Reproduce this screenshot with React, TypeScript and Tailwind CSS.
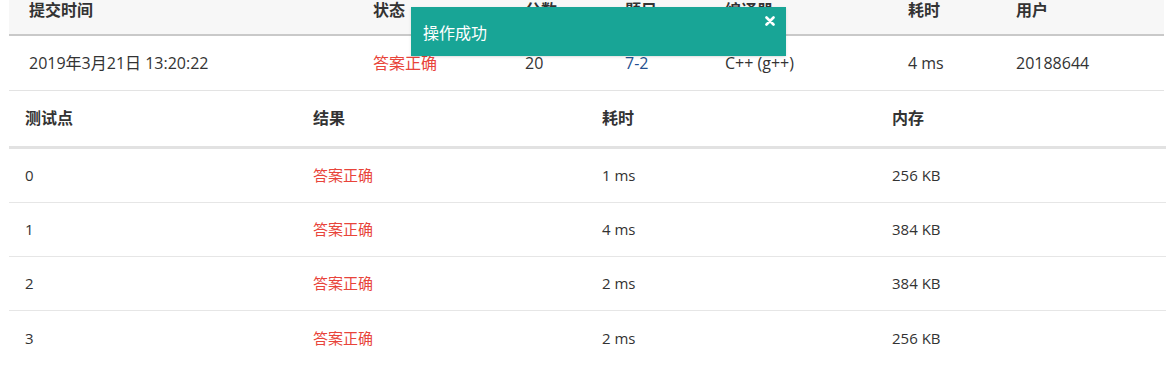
import React from "react";

const font = { fontFamily: '"Open Sans", "Noto Sans CJK SC", sans-serif' };

const topCols = [
  { label: "提交时间", w: "w-[344px]" },
  { label: "状态", w: "w-[152px]" },
  { label: "分数", w: "w-[100px]" },
  { label: "题目", w: "w-[100px]" },
  { label: "编译器", w: "w-[183px]" },
  { label: "耗时", w: "w-[108px]" },
  { label: "用户", w: "flex-1" },
];

const cases = [
  { id: "0", time: "1 ms", mem: "256 KB" },
  { id: "1", time: "4 ms", mem: "384 KB" },
  { id: "2", time: "2 ms", mem: "384 KB" },
  { id: "3", time: "2 ms", mem: "256 KB" },
];

export default function App() {
  return (
    <div className="relative w-[1171px] h-[377px] overflow-hidden bg-white text-[#333]" style={font}>
      {/* submission summary */}
      <div className="ml-[9px] w-[1155px]">
        <div className="flex h-[36px] bg-[#f7f7f7] border-b-2 border-[#c9c9c9] pl-[20px]">
          {topCols.map((c) => (
            <div key={c.label} className={`${c.w} text-[16px] font-bold leading-[20px]`}>
              {c.label}
            </div>
          ))}
        </div>
        <div className="flex items-center h-[55px] border-b border-[#e3e3e3] pl-[20px] text-[16px]">
          <div className="w-[344px]">2019年3月21日 13:20:22</div>
          <div className="w-[152px] text-[#e8443a]">答案正确</div>
          <div className="w-[100px]">20</div>
          <div className="w-[100px] text-[#24508f]">7-2</div>
          <div className="w-[183px]">C++ (g++)</div>
          <div className="w-[108px]">4 ms</div>
          <div className="flex-1">20188644</div>
        </div>
      </div>

      {/* test cases */}
      <div className="ml-[9px] w-[1157px]">
        <div className="flex h-[58px] items-end pb-[16px] border-b-[3px] border-[#e2e2e2] pl-[16px] text-[16px] font-bold">
          <div className="w-[288px]">测试点</div>
          <div className="w-[289px]">结果</div>
          <div className="w-[290px]">耗时</div>
          <div className="flex-1">内存</div>
        </div>
        {cases.map((c, i) => (
          <div
            key={c.id}
            className={`flex items-center h-[54px] pl-[16px] text-[15px] ${
              i < cases.length - 1 ? "border-b border-[#e6e6e6]" : ""
            }`}
          >
            <div className="w-[288px]">{c.id}</div>
            <div className="w-[289px] text-[#e8443a]">答案正确</div>
            <div className="w-[290px]">{c.time}</div>
            <div className="flex-1">{c.mem}</div>
          </div>
        ))}
      </div>

      {/* toast */}
      <div className="absolute left-[411px] top-[7px] w-[375px] h-[49px] bg-[#18a596] shadow-sm flex items-center pl-[12px]">
        <span className="text-white text-[16px] mt-[2px]">操作成功</span>
        <svg className="absolute right-[11px] top-[9px]" width="10" height="10" viewBox="0 0 10 10">
          <path d="M1.5 1.5 L8.5 8.5 M8.5 1.5 L1.5 8.5" stroke="white" strokeWidth="2.6" strokeLinecap="round" />
        </svg>
      </div>
    </div>
  );
}
